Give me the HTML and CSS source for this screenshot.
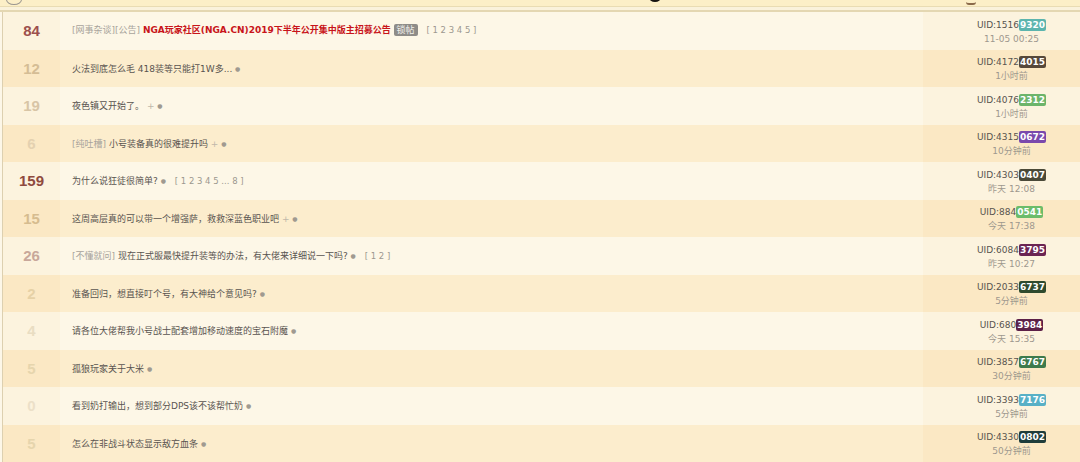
FILE: index.html
```html
<!DOCTYPE html>
<html lang="zh-CN">
<head>
    <meta charset="UTF-8">
    <title>NGA 帖子列表</title>
    <link rel="stylesheet" href="styles.css">
</head>
<body>
<div class="top">
    <span class="frag frag-ring"></span>
    <span class="frag frag-blob"></span>
    <span class="frag frag-tab"></span>
</div>
<div class="top-gap"></div>

<div class="topics">
    <div class="row light">
        <div class="cnt n84">84</div>
        <div class="title"><span class="tag-cat">[网事杂谈][公告]</span> <a class="hot">NGA玩家社区(NGA.CN)2019下半年公开集中版主招募公告</a> <span class="lock">锁帖</span> <span class="pages">[ 1 2 3 4 5 ]</span></div>
        <div class="meta"><div class="uid">UID:1516<b class="badge" style="background:#5cb5ae">9320</b></div><div class="time">11-05 00:25</div></div>
    </div>
    <div class="row dark">
        <div class="cnt n12">12</div>
        <div class="title">火法到底怎么毛 418装等只能打1W多... <i class="dot">●</i></div>
        <div class="meta"><div class="uid">UID:4172<b class="badge" style="background:#56483a">4015</b></div><div class="time">1小时前</div></div>
    </div>
    <div class="row light">
        <div class="cnt n19">19</div>
        <div class="title">夜色镇又开始了。 <i class="plus">+</i> <i class="dot">●</i></div>
        <div class="meta"><div class="uid">UID:4076<b class="badge" style="background:#6cb46a">2312</b></div><div class="time">1小时前</div></div>
    </div>
    <div class="row dark">
        <div class="cnt n6">6</div>
        <div class="title"><span class="tag-cat">[纯吐槽]</span> 小号装备真的很难提升吗 <i class="plus">+</i> <i class="dot">●</i></div>
        <div class="meta"><div class="uid">UID:4315<b class="badge" style="background:#7a48ac">0672</b></div><div class="time">10分钟前</div></div>
    </div>
    <div class="row light">
        <div class="cnt n159">159</div>
        <div class="title">为什么说狂徒很简单? <i class="dot">●</i> <span class="pages">[ 1 2 3 4 5 ... 8 ]</span></div>
        <div class="meta"><div class="uid">UID:4303<b class="badge" style="background:#4a4938">0407</b></div><div class="time">昨天 12:08</div></div>
    </div>
    <div class="row dark">
        <div class="cnt n15">15</div>
        <div class="title">这周高层真的可以带一个增强萨，救救深蓝色职业吧 <i class="plus">+</i> <i class="dot">●</i></div>
        <div class="meta"><div class="uid">UID:884<b class="badge" style="background:#6cbc6a">0541</b></div><div class="time">今天 17:38</div></div>
    </div>
    <div class="row light">
        <div class="cnt n26">26</div>
        <div class="title"><span class="tag-cat">[不懂就问]</span> 现在正式服最快提升装等的办法，有大佬来详细说一下吗? <i class="dot">●</i> <span class="pages">[ 1 2 ]</span></div>
        <div class="meta"><div class="uid">UID:6084<b class="badge" style="background:#6b2452">3795</b></div><div class="time">昨天 10:27</div></div>
    </div>
    <div class="row dark">
        <div class="cnt n2">2</div>
        <div class="title">准备回归，想直接叮个号，有大神给个意见吗? <i class="dot">●</i></div>
        <div class="meta"><div class="uid">UID:2033<b class="badge" style="background:#2e4a2e">6737</b></div><div class="time">5分钟前</div></div>
    </div>
    <div class="row light">
        <div class="cnt n4">4</div>
        <div class="title">请各位大佬帮我小号战士配套增加移动速度的宝石附魔 <i class="dot">●</i></div>
        <div class="meta"><div class="uid">UID:680<b class="badge" style="background:#5c2048">3984</b></div><div class="time">今天 15:35</div></div>
    </div>
    <div class="row dark">
        <div class="cnt n5">5</div>
        <div class="title">孤狼玩家关于大米 <i class="dot">●</i></div>
        <div class="meta"><div class="uid">UID:3857<b class="badge" style="background:#3e7a4c">6767</b></div><div class="time">30分钟前</div></div>
    </div>
    <div class="row light">
        <div class="cnt n0">0</div>
        <div class="title">看到奶打输出，想到部分DPS该不该帮忙奶 <i class="dot">●</i></div>
        <div class="meta"><div class="uid">UID:3393<b class="badge" style="background:#58b0c6">7176</b></div><div class="time">5分钟前</div></div>
    </div>
    <div class="row dark">
        <div class="cnt n5">5</div>
        <div class="title">怎么在非战斗状态显示敌方血条 <i class="dot">●</i></div>
        <div class="meta"><div class="uid">UID:4330<b class="badge" style="background:#1f3d3b">0802</b></div><div class="time">50分钟前</div></div>
    </div>
</div>
</body>
</html>
```

FILE: styles.css
```css
body {
    margin: 0;
    background: #fdf7e8;
    font-family: "DejaVu Sans", "Noto Sans CJK SC", sans-serif;
    overflow: hidden;
}

/* strip left over from the header above */
.top {
    position: relative;
    height: 6px;
    background: #fcefc7;
    border-bottom: 1px solid #e9dcb3;
}
.top-gap {
    height: 3px;
    background: #faf2db;
    border-bottom: 2px solid #e4d7b2;
}
.frag {
    position: absolute;
    top: -6px;
}
.frag-ring {
    left: 6px;
    width: 14px;
    height: 9px;
    border: 1px solid #9a9690;
    border-radius: 50%;
}
.frag-blob {
    left: 649px;
    top: -7px;
    width: 12px;
    height: 9px;
    background: #151311;
    border-radius: 50%;
}
.frag-tab {
    left: 966px;
    top: -3px;
    width: 10px;
    height: 6px;
    border-bottom: 2px solid #8a6a4a;
    border-radius: 0 0 3px 3px;
}

.topics {
    border-left: 1px solid #ddd0b0;
    margin-left: 2px;
}
.row {
    display: grid;
    grid-template-columns: 57px 1fr 157px;
    height: 37.5px;
}
.row.light { background: #fdf7e7; }
.row.dark { background: #fcedcd; }
.row.light .cnt, .row.light .meta { background: #fcf3de; }
.row.dark .cnt, .row.dark .meta { background: #fbe8c4; }

.cnt {
    display: flex;
    align-items: center;
    justify-content: center;
    font-family: "Liberation Sans", Arial, sans-serif;
    font-weight: bold;
    font-size: 15px;
}
.n84 { color: #9c4f4c; }
.n159 { color: #8f4a3e; }
.n26 { color: #c8a79a; }
.n15 { color: #d6bc8f; }
.n12 { color: #d5bd95; }
.n19 { color: #d8c5a6; }
.n6 { color: #e4d1b0; }
.n2 { color: #e6d1a6; }
.n4 { color: #e9ddc2; }
.n5 { color: #e6d5ad; }
.n0 { color: #ece0c8; }

.title {
    padding-left: 12px;
    font-size: 9px;
    line-height: 37px;
    color: #595450;
    white-space: nowrap;
    overflow: hidden;
}
.title i {
    font-style: normal;
}
.tag-cat {
    color: #a8a49c;
}
.hot {
    color: #c8141a;
    font-weight: bold;
}
.lock {
    display: inline-block;
    padding: 0 3px;
    line-height: 12px;
    background: #8e8c88;
    color: #f2f0ec;
    border-radius: 2px;
}
.pages {
    margin-left: 6px;
    color: #9c988f;
    font-size: 8.5px;
}
.dot {
    color: #a09a90;
    font-size: 6px;
    vertical-align: 1px;
}
.plus {
    color: #c0b8aa;
}

.meta {
    display: flex;
    flex-direction: column;
    justify-content: center;
    align-items: center;
    padding: 2px 0 0 20px;
    font-size: 9px;
    line-height: 14px;
}
.uid {
    color: #58544e;
}
.badge {
    padding: 1px 1px;
    color: #fff;
    border-radius: 2px;
}
.time {
    color: #9e988e;
}
```
